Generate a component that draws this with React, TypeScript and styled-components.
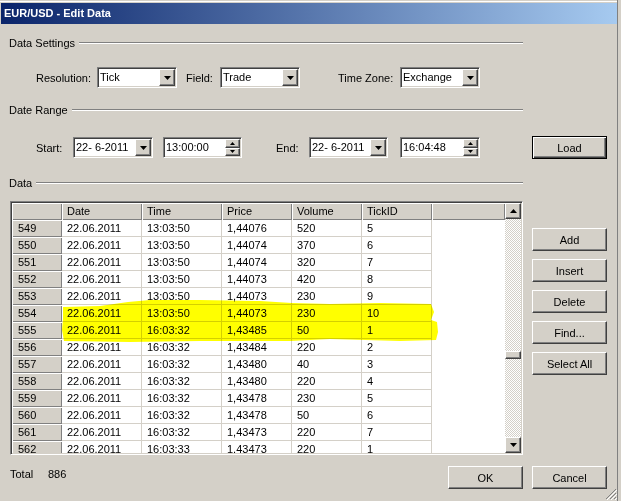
import React from "react";
import styled, { createGlobalStyle } from "styled-components";

const GlobalStyle = createGlobalStyle`
  html, body { margin: 0; padding: 0; background: #d4d0c8; }
  body { font-family: "Liberation Sans", Arial, sans-serif; font-size: 11px; color: #000; }
  * { box-sizing: border-box; }
`;

const Page = styled.div`
  position: relative;
  width: 621px;
  height: 501px;
  overflow: hidden;
  background: #d4d0c8;
`;

const Window = styled.div`
  width: 618px;
  height: 501px;
  padding-top: 3px;
  padding-left: 1px;
  border-right: 1px solid #808080;
  background: linear-gradient(#d4d0c8 0 1px, #ffffff 1px 2px, #d4d0c8 2px) top / 100% 3px no-repeat, #d4d0c8;
`;

const TitleBar = styled.div`
  height: 21px;
  line-height: 21px;
  padding-left: 3px;
  color: #fff;
  font-weight: bold;
  font-size: 11px;
  background: linear-gradient(to right, #0a246a, #a6caf0);
  white-space: nowrap;
`;

const Body = styled.div`
  padding: 0 10px 0 8px;
`;

const SectionHeader = styled.div<{ $mt: number }>`
  display: flex;
  align-items: center;
  width: 514px;
  height: 14px;
  line-height: 14px;
  margin-top: ${(p) => p.$mt}px;
`;

const SectionLine = styled.div`
  flex: 1;
  height: 2px;
  margin-left: 4px;
  border-top: 1px solid #808080;
  border-bottom: 1px solid #ffffff;
`;

const Row = styled.div<{ $mt: number; $h: number }>`
  display: flex;
  align-items: center;
  height: ${(p) => p.$h}px;
  margin-top: ${(p) => p.$mt}px;
  padding-left: 27px;
`;

const Label = styled.div<{ $w: number; $ml?: number }>`
  width: ${(p) => p.$w}px;
  margin-left: ${(p) => p.$ml ?? 0}px;
  white-space: nowrap;
  flex-shrink: 0;
`;

const Sunken = styled.div<{ $w: number; $ml?: number }>`
  display: flex;
  width: ${(p) => p.$w}px;
  height: 21px;
  margin-left: ${(p) => p.$ml ?? 0}px;
  flex-shrink: 0;
  background: #fff;
  border: 1px solid;
  border-color: #808080 #ffffff #ffffff #808080;
  box-shadow: inset 1px 1px #404040, inset -1px -1px #d4d0c8;
  padding: 1px;
`;

const FieldText = styled.div`
  flex: 1;
  padding-left: 1px;
  line-height: 17px;
  white-space: nowrap;
  overflow: hidden;
`;

const Raised = styled.div`
  display: flex;
  align-items: center;
  justify-content: center;
  background: #d4d0c8;
  border: 1px solid;
  border-color: #ffffff #404040 #404040 #ffffff;
  box-shadow: inset -1px -1px #808080;
`;

const DropButton = styled(Raised)`
  width: 16px;
  height: 17px;
  flex-shrink: 0;
`;

const SpinColumn = styled.div`
  display: flex;
  flex-direction: column;
  width: 15px;
  height: 17px;
  flex-shrink: 0;
`;

const SpinHalf = styled(Raised)`
  flex: 1;
`;

const Button = styled.button<{ $ml?: number }>`
  width: 75px;
  height: 23px;
  flex-shrink: 0;
  margin: 0 0 0 ${(p) => p.$ml ?? 0}px;
  padding: 0;
  font-family: "Liberation Sans", Arial, sans-serif;
  font-size: 11px;
  color: #000;
  background: #d4d0c8;
  border: 1px solid;
  border-color: #ffffff #404040 #404040 #ffffff;
  box-shadow: inset -1px -1px #808080;
`;

const DefaultButton = styled(Button)`
  border-color: #000;
  box-shadow: inset 1px 1px #ffffff, inset -1px -1px #404040, inset -2px -2px #808080;
`;

const Middle = styled.div`
  display: flex;
  margin-top: 11px;
`;

const GridFrame = styled.div`
  display: flex;
  width: 514px;
  height: 254px;
  margin-left: 1px;
  background: #fff;
  border: 1px solid;
  border-color: #808080 #ffffff #ffffff #808080;
  box-shadow: inset 1px 1px #404040, inset -1px -1px #d4d0c8;
  padding: 1px;
`;

const TableArea = styled.div`
  position: relative;
  width: 493px;
  height: 250px;
  overflow: hidden;
`;

const Table = styled.div`
  display: grid;
  grid-template-columns: 50px 80px 80px 70px 70px 70px 73px;
  grid-auto-rows: 17px;
`;

const HeadCell = styled.div<{ $pl?: number }>`
  height: 17px;
  line-height: 16px;
  padding-left: ${(p) => p.$pl ?? 5}px;
  background: #d4d0c8;
  box-shadow: inset 1px 1px #ffffff, inset -1px -1px #808080;
  white-space: nowrap;
  overflow: hidden;
`;

const DataCell = styled.div<{ $filler?: boolean }>`
  height: 17px;
  line-height: 16px;
  padding-left: 5px;
  background: #fff;
  border-right: ${(p) => (p.$filler ? "none" : "1px solid #d4d0c8")};
  border-bottom: ${(p) => (p.$filler ? "none" : "1px solid #d4d0c8")};
  white-space: nowrap;
  overflow: hidden;
`;

const Highlight = styled.svg`
  position: absolute;
  left: 0;
  top: 0;
  mix-blend-mode: multiply;
  pointer-events: none;
`;

const ScrollBar = styled.div`
  display: flex;
  flex-direction: column;
  width: 16px;
  height: 250px;
`;

const ScrollButton = styled(Raised)`
  width: 16px;
  height: 16px;
  flex-shrink: 0;
`;

const Track = styled.div<{ $h?: number }>`
  ${(p) => (p.$h ? `height: ${p.$h}px;` : "flex: 1;")}
  background-color: #d4d0c8;
  background-image: conic-gradient(#ffffff 25%, #d4d0c8 0 50%, #ffffff 0 75%, #d4d0c8 0);
  background-size: 2px 2px;
`;

const Thumb = styled(Raised)`
  height: 8px;
  flex-shrink: 0;
`;

const SideButtons = styled.div`
  display: flex;
  flex-direction: column;
  gap: 8px;
  margin-left: 9px;
  padding-top: 27px;
`;

const Footer = styled.div`
  display: flex;
  align-items: flex-start;
  margin-top: 11px;
`;

const TotalLabel = styled.div<{ $w: number; $ml?: number }>`
  width: ${(p) => p.$w}px;
  margin-left: ${(p) => p.$ml ?? 0}px;
  margin-top: 1px;
  line-height: 14px;
`;

const Spacer = styled.div`
  flex: 1;
`;

const Grip = styled.svg`
  position: absolute;
  right: 4px;
  bottom: 1px;
`;

const DownArrow = ({ w = 7, h = 4 }: { w?: number; h?: number }) => (
  <svg width={w} height={h} viewBox={`0 0 ${w} ${h}`}>
    <polygon points={`0,0 ${w},0 ${w / 2},${h}`} fill="#000" />
  </svg>
);

const UpArrow = ({ w = 7, h = 4 }: { w?: number; h?: number }) => (
  <svg width={w} height={h} viewBox={`0 0 ${w} ${h}`}>
    <polygon points={`0,${h} ${w},${h} ${w / 2},0`} fill="#000" />
  </svg>
);

const Combo = ({ w, ml, value }: { w: number; ml?: number; value: string }) => (
  <Sunken $w={w} $ml={ml}>
    <FieldText>{value}</FieldText>
    <DropButton>
      <DownArrow />
    </DropButton>
  </Sunken>
);

const Spin = ({ w, ml, value }: { w: number; ml?: number; value: string }) => (
  <Sunken $w={w} $ml={ml}>
    <FieldText>{value}</FieldText>
    <SpinColumn>
      <SpinHalf>
        <UpArrow w={5} h={3} />
      </SpinHalf>
      <SpinHalf>
        <DownArrow w={5} h={3} />
      </SpinHalf>
    </SpinColumn>
  </Sunken>
);

const rows: [string, string, string, string, string, string][] = [
  ["549", "22.06.2011", "13:03:50", "1,44076", "520", "5"],
  ["550", "22.06.2011", "13:03:50", "1,44074", "370", "6"],
  ["551", "22.06.2011", "13:03:50", "1,44074", "320", "7"],
  ["552", "22.06.2011", "13:03:50", "1,44073", "420", "8"],
  ["553", "22.06.2011", "13:03:50", "1,44073", "230", "9"],
  ["554", "22.06.2011", "13:03:50", "1,44073", "230", "10"],
  ["555", "22.06.2011", "16:03:32", "1,43485", "50", "1"],
  ["556", "22.06.2011", "16:03:32", "1,43484", "220", "2"],
  ["557", "22.06.2011", "16:03:32", "1,43480", "40", "3"],
  ["558", "22.06.2011", "16:03:32", "1,43480", "220", "4"],
  ["559", "22.06.2011", "16:03:32", "1,43478", "230", "5"],
  ["560", "22.06.2011", "16:03:32", "1,43478", "50", "6"],
  ["561", "22.06.2011", "16:03:32", "1,43473", "220", "7"],
  ["562", "22.06.2011", "16:03:33", "1,43473", "220", "1"],
];

const highlightPoints =
  "51,104 88,103 116,99 138,97 188,97 248,98 280,100 318,101 368,100 419,101 422,109 419,117 425,119 426,129 424,137 388,138 318,136 278,138 188,138 118,139 52,138 50,127 51,115";

export default function App() {
  return (
    <Page>
      <GlobalStyle />
      <Window>
        <TitleBar>EUR/USD - Edit Data</TitleBar>
        <Body>
          <SectionHeader $mt={12}>
            Data Settings
            <SectionLine />
          </SectionHeader>
          <Row $mt={17} $h={21}>
            <Label $w={61}>Resolution:</Label>
            <Combo w={80} value="Tick" />
            <Label $w={34} $ml={9}>Field:</Label>
            <Combo w={80} value="Trade" />
            <Label $w={62} $ml={38}>Time Zone:</Label>
            <Combo w={80} value="Exchange" />
          </Row>
          <SectionHeader $mt={15}>
            Date Range
            <SectionLine />
          </SectionHeader>
          <Row $mt={19} $h={23}>
            <Label $w={37}>Start:</Label>
            <Combo w={80} value="22- 6-2011" />
            <Spin w={79} ml={10} value="13:00:00" />
            <Label $w={33} $ml={34}>End:</Label>
            <Combo w={79} value="22- 6-2011" />
            <Spin w={80} ml={12} value="16:04:48" />
            <DefaultButton $ml={52}>Load</DefaultButton>
          </Row>
          <SectionHeader $mt={17}>
            Data
            <SectionLine />
          </SectionHeader>
          <Middle>
            <GridFrame>
              <TableArea>
                <Table>
                  <HeadCell />
                  <HeadCell>Date</HeadCell>
                  <HeadCell>Time</HeadCell>
                  <HeadCell>Price</HeadCell>
                  <HeadCell>Volume</HeadCell>
                  <HeadCell>TickID</HeadCell>
                  <HeadCell />
                  {rows.map((r) => (
                    <React.Fragment key={r[0]}>
                      <HeadCell $pl={6}>{r[0]}</HeadCell>
                      <DataCell>{r[1]}</DataCell>
                      <DataCell>{r[2]}</DataCell>
                      <DataCell>{r[3]}</DataCell>
                      <DataCell>{r[4]}</DataCell>
                      <DataCell>{r[5]}</DataCell>
                      <DataCell $filler />
                    </React.Fragment>
                  ))}
                </Table>
                <Highlight width={493} height={250}>
                  <polygon points={highlightPoints} fill="#ffff00" />
                </Highlight>
              </TableArea>
              <ScrollBar>
                <ScrollButton>
                  <UpArrow />
                </ScrollButton>
                <Track $h={132} />
                <Thumb />
                <Track />
                <ScrollButton>
                  <DownArrow />
                </ScrollButton>
              </ScrollBar>
            </GridFrame>
            <SideButtons>
              <Button>Add</Button>
              <Button>Insert</Button>
              <Button>Delete</Button>
              <Button>Find...</Button>
              <Button>Select All</Button>
            </SideButtons>
          </Middle>
          <Footer>
            <TotalLabel $w={38} $ml={1}>Total</TotalLabel>
            <TotalLabel $w={40}>886</TotalLabel>
            <Spacer />
            <Button>OK</Button>
            <Button $ml={9}>Cancel</Button>
          </Footer>
        </Body>
      </Window>
      <Grip width={12} height={12} viewBox="0 0 12 12">
        <path d="M11 1 L1 11 M11 5 L5 11 M11 9 L9 11" stroke="#808080" strokeWidth="1" />
        <path d="M12 2 L2 12 M12 6 L6 12 M12 10 L10 12" stroke="#ffffff" strokeWidth="1" />
      </Grip>
    </Page>
  );
}
